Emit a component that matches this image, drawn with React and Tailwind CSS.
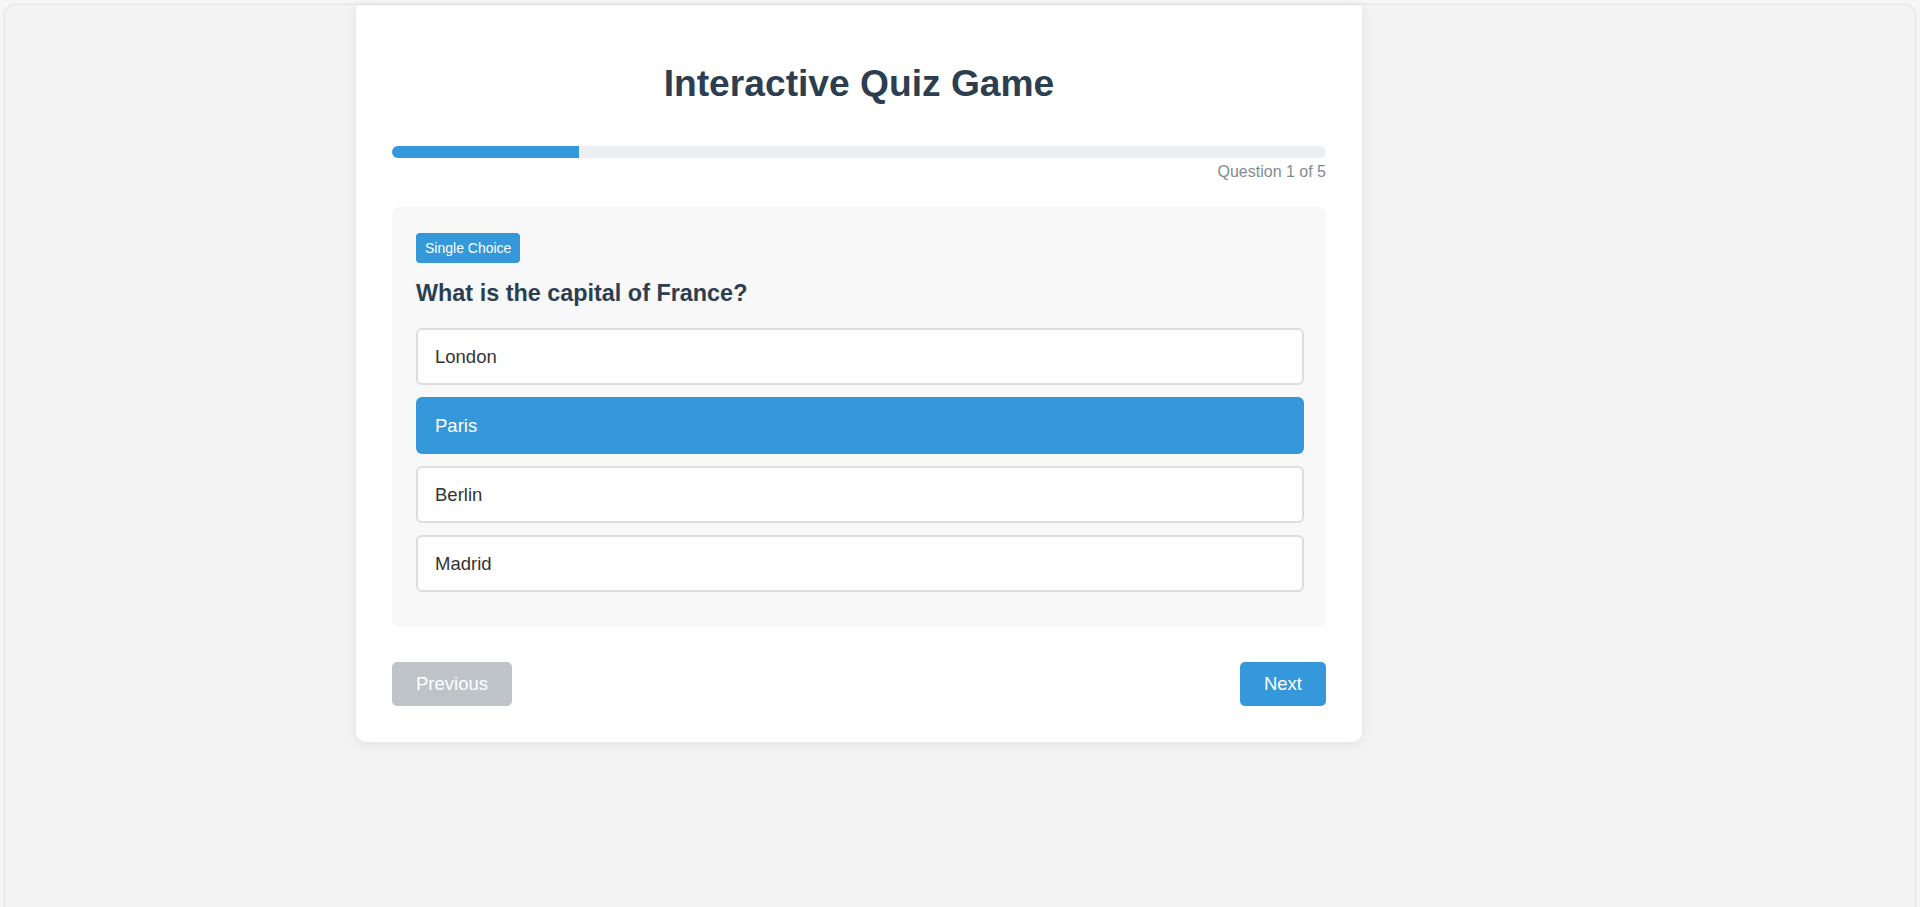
import { useState } from "react";

const options = ["London", "Paris", "Berlin", "Madrid"];

const App = () => {
  const [selected, setSelected] = useState("Paris");

  return (
    <div className="h-[907px] overflow-hidden bg-[#f7f7f7] pt-1 px-1 font-['Liberation_Sans',Arial,sans-serif]">
      <div className="h-[940px] rounded-t-xl border border-[#e6e6e6] bg-[#f4f4f4] shadow-[0_0_4px_rgba(0,0,0,0.06)]">
        <div className="ml-[351px] w-[1006px] rounded-b-[10px] rounded-t-[4px] bg-white px-9 pt-[56px] pb-9 shadow-[0_2px_14px_rgba(0,0,0,0.09)]">
          <h1 className="text-center text-[37.2px] font-bold leading-[44px] text-[#2c3e50]">
            Interactive Quiz Game
          </h1>

          <div className="mt-[41px] h-3 w-full overflow-hidden rounded-full bg-[#ecf0f1]">
            <div className="h-full w-1/5 bg-[#3498db]"></div>
          </div>
          <div className="mt-[5px] text-right text-base leading-[18px] text-[#7f8c8d]">
            Question 1 of 5
          </div>

          <div className="mt-[26px] rounded-lg bg-[#f8f8f8] pl-6 pr-[22px] pt-[26px] pb-[23px]">
            <span className="inline-flex h-[30px] items-center rounded-[4px] bg-[#3498db] px-[9px] text-sm text-white">
              Single Choice
            </span>
            <h2 className="mt-[17px] mb-[22px] text-[23.4px] font-bold leading-[26px] text-[#2c3e50]">
              What is the capital of France?
            </h2>

            <div className="flex flex-col">
              {options.map((opt) => {
                const active = selected === opt;
                return (
                  <button
                    key={opt}
                    onClick={() => setSelected(opt)}
                    className={
                      active
                        ? "mb-3 flex h-[57px] items-center rounded-md border-2 border-[#3498db] bg-[#3498db] px-[17px] text-left text-[18.5px] text-white"
                        : "mb-3 flex h-[57px] items-center rounded-md border-2 border-[#dddddd] bg-white px-[17px] text-left text-[18.5px] text-[#333333]"
                    }
                  >
                    {opt}
                  </button>
                );
              })}
            </div>
          </div>

          <div className="mt-[35px] flex items-center justify-between">
            <button className="h-11 rounded-[5px] bg-[#bdc3c7] px-6 text-[18.5px] text-white">
              Previous
            </button>
            <button className="h-11 rounded-[5px] bg-[#3498db] px-6 text-[18.5px] text-white">
              Next
            </button>
          </div>
        </div>
      </div>
    </div>
  );
};

export default App;
